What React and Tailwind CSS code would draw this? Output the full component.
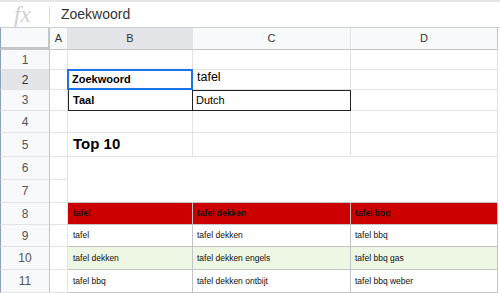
import React from "react";

const F = { fontFamily: '"Liberation Sans", Arial, sans-serif' };

function RowHead({ n, sel }) {
  return (
    <div
      className={`flex items-center justify-center border-l border-l-[#8fa0bf] border-r border-r-[#c4c7c5] border-b border-b-[#e2e3e3] text-[12px] ${
        sel ? "bg-[#e3e5e8] text-[#333]" : "bg-[#f8f9fa] text-[#555]"
      }`}
    >
      {n}
    </div>
  );
}

const cell = "border-r border-b border-[#e2e3e3] bg-white";
const tcell = "flex items-center border-r border-b border-[#c4c4c4] text-[8.5px] text-[#111]";

export default function App() {
  const table = [
    ["tafel", "tafel dekken", "tafel bbq"],
    ["tafel", "tafel dekken", "tafel bbq"],
    ["tafel dekken", "tafel dekken engels", "tafel bbq gas"],
    ["tafel bbq", "tafel dekken ontbijt", "tafel bbq weber"],
  ];
  return (
    <div className="w-[500px] h-[293px] overflow-hidden bg-white" style={F}>
      <div className="h-[28px] flex items-center border-t-2 border-t-[#e6e6e6] border-b border-b-[#d0d0d0]">
        <div
          className="w-[49px] pl-[14px] text-[23px] italic text-[#cfcfcf] leading-none"
          style={{ fontFamily: '"Liberation Serif", serif' }}
        >
          fx
        </div>
        <div className="w-px h-[17px] bg-[#dadce0]" />
        <div className="pl-[11px] text-[14px] text-[#333]">Zoekwoord</div>
      </div>
      <div className="grid grid-cols-[50px_18px_125px_158px_147px_2px] grid-rows-[22px_20px_20px_21px_22px_24px_23px_23px_22px_22px_23px_23px]">
        {/* header row */}
        <div className="bg-[#f8f9fa] border-l border-l-[#8fa0bf] border-r-2 border-r-[#c4c7c5] border-b-[3px] border-b-[#c4c7c5]" />
        <div className="flex items-center justify-center bg-[#f8f9fa] border-r border-b border-r-[#e2e3e3] border-b-[#c4c7c5] text-[11px] text-[#333]">A</div>
        <div className="flex items-center justify-center bg-[#e3e5e8] border-r border-b border-r-[#e2e3e3] border-b-[#c4c7c5] text-[11px] text-[#333]">B</div>
        <div className="flex items-center justify-center bg-[#f8f9fa] border-r border-b border-r-[#e2e3e3] border-b-[#c4c7c5] text-[11px] text-[#333]">C</div>
        <div className="flex items-center justify-center bg-[#f8f9fa] border-r border-b border-r-[#c4c7c5] border-b-[#c4c7c5] text-[11px] text-[#333]">D</div>
        <div className="bg-white" />

        {/* row 1 */}
        <RowHead n={1} />
        <div className={cell} />
        <div className={cell} />
        <div className={cell} />
        <div className={cell} />
        <div />

        {/* row 2 */}
        <RowHead n={2} sel />
        <div className={cell} />
        <div className="relative flex items-end pb-[2px] pl-[4px] text-[11px] font-bold text-black border-r border-b border-[#e2e3e3]">
          Zoekwoord
          <div className="absolute -left-px -top-px -right-px -bottom-px border-2 border-[#1a73e8]" />
        </div>
        <div className="flex items-end pb-[2px] pl-[4px] text-[12.5px] text-black border-r border-b border-[#e2e3e3]">tafel</div>
        <div className={cell} />
        <div />

        {/* row 3 */}
        <RowHead n={3} />
        <div className={cell} />
        <div className="flex items-end pb-[2px] pl-[4px] text-[11px] font-bold text-black border-l border-r border-b border-[#222]">Taal</div>
        <div className="flex items-end pb-[2px] pl-[3px] text-[11px] text-black border-t border-r border-b border-[#222]">Dutch</div>
        <div className={cell} />
        <div />

        {/* row 4 */}
        <RowHead n={4} />
        <div className={cell} />
        <div className={cell} />
        <div className={cell} />
        <div className={cell} />
        <div />

        {/* row 5 */}
        <RowHead n={5} />
        <div className={cell} />
        <div className="flex items-end pb-[1px] pl-[5px] text-[15px] font-bold text-black border-r border-b border-[#e2e3e3]">Top 10</div>
        <div className={cell} />
        <div className={cell} />
        <div />

        {/* rows 6-7 */}
        <RowHead n={6} />
        <div className={cell} />
        <div className="col-span-3 row-span-2 bg-white border-r border-r-[#e2e3e3] border-b border-b-[#c4c4c4]" />
        <div />
        <RowHead n={7} />
        <div className={cell} />
        <div />

        {/* table rows 8-11 */}
        {table.map((r, i) => (
          <React.Fragment key={i}>
            <RowHead n={8 + i} />
            <div className={cell} />
            {r.map((t, j) => (
              <div
                key={j}
                className={`${tcell} ${j === 0 ? "pl-[5px]" : "pl-[4px]"} ${
                  i === 0 ? "bg-[#cc0000] font-bold" : i === 2 ? "bg-[#eef6e4]" : "bg-white"
                }`}
              >
                {t}
              </div>
            ))}
            <div />
          </React.Fragment>
        ))}
      </div>
    </div>
  );
}
